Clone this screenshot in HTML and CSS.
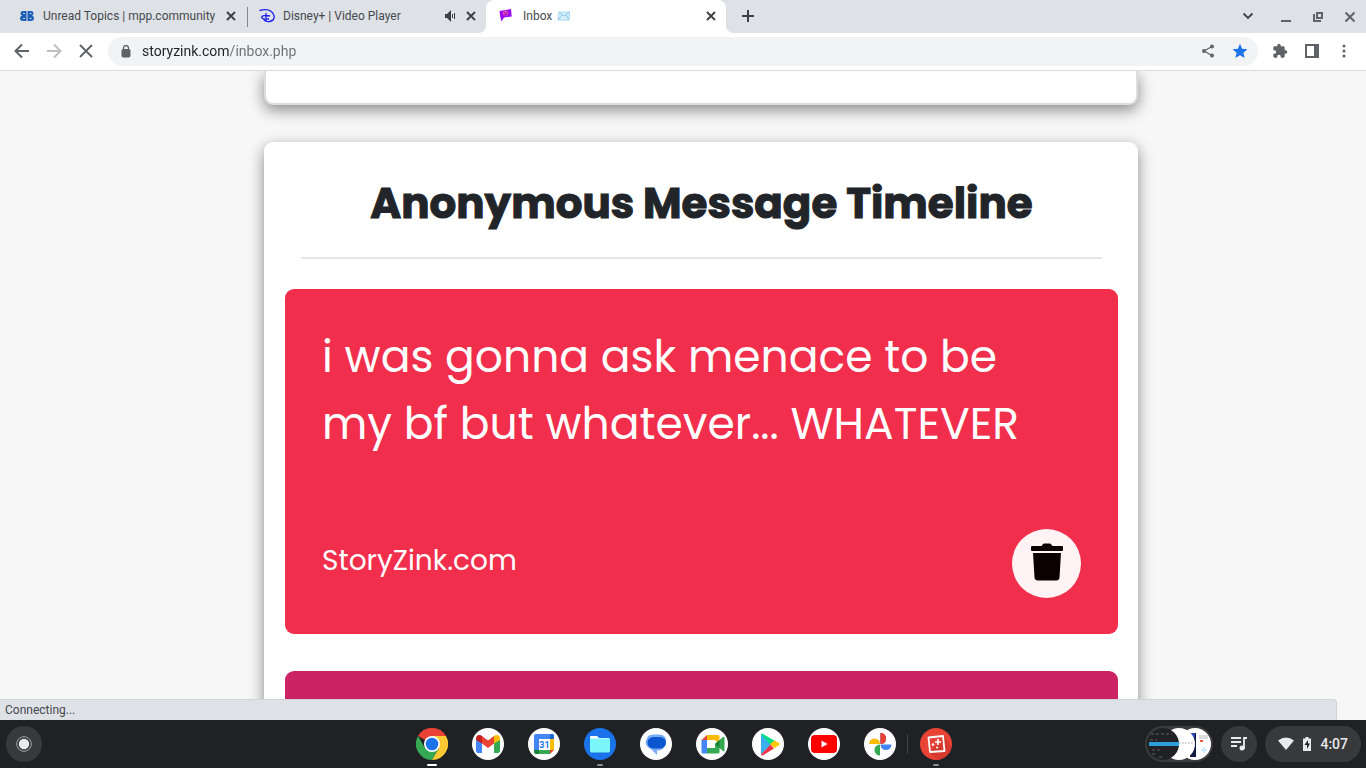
FILE: index.html
```html
<!DOCTYPE html>
<html lang="en">
<head>
  <meta charset="UTF-8">
  <title>Inbox</title>
  <link rel="stylesheet" href="styles.css">
</head>
<body>
  <header class="tabstrip">
    <div class="tab">
      <svg class="favicon" viewBox="0 0 16 16"><path d="M7.500 3H4Q1.500 3 1.500 5.300Q1.500 7 3 7.600Q1 8.300 1 10.300Q1 13 4 13H7.500ZM8.500 3H12q2.500 0 2.500 2.300q0 1.700-1.500 2.300q2 .7 2 2.700q0 2.700-3 2.700H8.500z" fill="#1f5fb8"/><path d="M4 5.500H6M4 10.500H6M10.500 5.500H12.500M10.500 10.500H12.500" stroke="#b9cfec"/></svg>
      <span class="tab-title">Unread Topics | mpp.community</span>
      <button class="icon-btn" aria-label="Close tab"><svg width="10" height="10" viewBox="0 0 10 10"><path d="M1 1l8 8M9 1L1 9" stroke="#3c4043" stroke-width="1.900"/></svg></button>
    </div>
    <div class="tab divided">
      <svg class="favicon" viewBox="0 0 16 16" fill="none" stroke="#1c1cf0" stroke-width="1.300"><path d="M.5 2.500Q12-.5 15 7.500Q16 12.500 10.500 13.500Q6 14 4.500 11.500M7 5v9M11 8Q3 6.500 2.500 9.500Q3.500 11.500 10 11"/></svg>
      <span class="tab-title">Disney+ | Video Player</span>
      <svg class="sound" width="10" height="12" viewBox="0 0 10 12"><path d="M0 4h2l4-4v12L2 8H0z" fill="#3c4043"/><path d="M7.500 4v4M9.500 3v6" stroke="#3c4043"/></svg>
      <button class="icon-btn" aria-label="Close tab"><svg width="10" height="10" viewBox="0 0 10 10"><path d="M1 1l8 8M9 1L1 9" stroke="#3c4043" stroke-width="1.900"/></svg></button>
    </div>
    <div class="tab active">
      <svg class="favicon" viewBox="0 0 16 16"><path d="M.5 3L12 1l.7 7.500L5 9.500l-2.500 4L1.300 9z" fill="#9a08f5"/><circle cx="6.500" cy="5" r="2.600" fill="#e84fb5"/><path d="M5 4l1.500 1.500L8.500 4M5.500 6.500h2" stroke="#8a0bb8" fill="none"/></svg>
      <span class="tab-title">Inbox
        <svg class="envelope" width="13" height="10" viewBox="0 0 13 10"><path d="M2 1h11l-1 8H1z" fill="#d8effb" stroke="#a8d6f0"/><path d="M2 1l5 4l6-4M1 9l4-5M12 9L9 4" fill="none" stroke="#8ec9ec"/></svg>
      </span>
      <button class="icon-btn" aria-label="Close tab"><svg width="10" height="10" viewBox="0 0 10 10"><path d="M1 1l8 8M9 1L1 9" stroke="#3c4043" stroke-width="1.900"/></svg></button>
    </div>
    <button class="icon-btn new-tab" aria-label="New tab"><svg width="12" height="12" viewBox="0 0 12 12"><path d="M6 0v12M0 6h12" stroke="#3c4043" stroke-width="2"/></svg></button>
    <div class="window-controls">
      <button class="icon-btn search-tabs" aria-label="Search tabs"><svg width="12" height="12" viewBox="0 0 12 12"><path d="M1.500 3.500L6 8l4.500-4.500" fill="none" stroke="#3c4043" stroke-width="1.800"/></svg></button>
      <button class="icon-btn" aria-label="Minimize"><svg width="12" height="12" viewBox="0 0 12 12"><path d="M1 10h10" stroke="#5f6368" stroke-width="2"/></svg></button>
      <button class="icon-btn" aria-label="Restore"><svg width="12" height="12" viewBox="0 0 12 12" fill="none" stroke="#5f6368" stroke-width="2"><path d="M5 2h5v5H5zM2 3v7h7"/></svg></button>
      <button class="icon-btn" aria-label="Close"><svg width="12" height="12" viewBox="0 0 12 12"><path d="M1.500 1.500l9 9M10.500 1.500l-9 9" stroke="#5f6368" stroke-width="2"/></svg></button>
    </div>
  </header>

  <nav class="toolbar">
    <button class="icon-btn tool" aria-label="Back"><svg width="16" height="16" viewBox="0 0 16 16"><path d="M15 8H2M8 1.500L1.500 8L8 14.500" fill="none" stroke="#5f6368" stroke-width="2"/></svg></button>
    <button class="icon-btn tool" aria-label="Forward"><svg width="16" height="16" viewBox="0 0 16 16"><path d="M1 8h13M8 1.500L14.500 8L8 14.500" fill="none" stroke="#bdbfc1" stroke-width="2"/></svg></button>
    <button class="icon-btn tool" aria-label="Stop loading"><svg width="14" height="14" viewBox="0 0 14 14"><path d="M1 1l12 12M13 1L1 13" stroke="#5f6368" stroke-width="1.900"/></svg></button>
    <div class="omnibox">
      <svg width="10" height="13" viewBox="0 0 10 13"><path d="M2.500 5V3a2.500 2.500 0 0 1 5 0v2" fill="none" stroke="#5f6368" stroke-width="1.300"/><rect x="1" y="4.500" width="8" height="7.500" rx="1" fill="#5f6368" stroke="#5f6368"/></svg>
      <input class="url" type="text" value="storyzink.com/inbox.php" aria-label="Address">
      <button class="icon-btn tool" aria-label="Share"><svg width="14" height="14" viewBox="0 0 14 14" fill="#5f6368"><path d="M11 2.500L3 7l8 4.500" fill="none" stroke="#5f6368" stroke-width="1.300"/><circle cx="11" cy="2.500" r="2"/><circle cx="3" cy="7" r="2"/><circle cx="11" cy="11.500" r="2"/></svg></button>
      <button class="icon-btn tool" aria-label="Bookmark"><svg width="16" height="16" viewBox="0 0 16 16"><path d="M8 .8l2.100 5l5.400.5l-4.100 3.500l1.200 5.200L8 12.200L3.400 15l1.200-5.200L.5 6.300l5.400-.5z" fill="#1a73e8"/></svg></button>
    </div>
    <button class="icon-btn tool" aria-label="Extensions"><svg width="16" height="16" viewBox="0 0 24 24"><path d="M20.500 11H19V7c0-1.100-.9-2-2-2h-4V3.500a2.500 2.500 0 0 0-5 0V5H4c-1.100 0-2 .9-2 2v3.800h1.500a2.700 2.700 0 0 1 0 5.400H2V20c0 1.100.9 2 2 2h3.800v-1.500a2.700 2.700 0 0 1 5.400 0V22H17c1.100 0 2-.9 2-2v-4h1.500a2.500 2.500 0 0 0 0-5z" fill="#5f6368"/></svg></button>
    <button class="icon-btn tool" aria-label="Side panel"><svg width="14" height="14" viewBox="0 0 14 14"><path d="M1 1h12v12H1z" fill="none" stroke="#5f6368" stroke-width="2"/><path d="M9 0h5v14H9z" fill="#5f6368"/></svg></button>
    <button class="icon-btn tool" aria-label="Menu"><svg width="4" height="14" viewBox="0 0 4 14" fill="#5f6368"><circle cx="2" cy="2" r="1.500"/><circle cx="2" cy="7" r="1.500"/><circle cx="2" cy="12" r="1.500"/></svg></button>
  </nav>

  <main class="page">
    <section class="card previous"></section>
    <section class="card timeline">
      <h1>Anonymous Message Timeline</h1>
      <hr>
      <article class="message red">
        <p class="message-text">i was gonna ask menace to be my bf but whatever... WHATEVER</p>
        <div class="message-footer">
          <span class="brand">StoryZink.com</span>
          <button class="delete" aria-label="Delete message">
            <svg width="34" height="38" viewBox="0 0 34 38" fill="#0c0002"><path d="M2 3h9.500l1.200-1.600q.6-.9 1.600-.9h5.400q1 0 1.600.9L22.500 3H32q1 0 1 1v3q0 1-1 1H2q-1 0-1-1V4q0-1 1-1zM3 10h28l-1.500 24.500q-.3 3-3.300 3H7.800q-3 0-3.300-3z"/></svg>
          </button>
        </div>
      </article>
      <article class="message pink"></article>
    </section>
    <div class="status">Connecting...</div>
  </main>

  <footer class="shelf">
    <div class="shelf-start">
      <button class="launcher" aria-label="Launcher"><svg width="16" height="16" viewBox="0 0 16 16"><circle cx="8" cy="8" r="7.300" fill="none" stroke="#a5a6a8"/><circle cx="8" cy="8" r="5.200" fill="#e8eaed"/></svg></button>
    </div>
    <div class="apps">
      <button class="app running focused" aria-label="Chrome"><svg viewBox="0 0 32 32"><path d="M16 16L2.100 8A16 16 0 0 1 29.900 8H16z" fill="#ea4335"/><path d="M2.100 8A16 16 0 0 0 16 32l7-12L16 16L9 20z" fill="#34a853"/><path d="M16 16l7 4l-7 12A16 16 0 0 0 29.900 8H16z" fill="#fcc934"/><circle cx="16" cy="16" r="8" fill="#fff"/><circle cx="16" cy="16" r="6.300" fill="#1a73e8"/></svg></button>
      <button class="app" aria-label="Gmail"><svg viewBox="0 0 32 32"><circle cx="16" cy="16" r="16" fill="#fff"/><path d="M4 10v13q0 2 2 2h4V14z" fill="#4285f4"/><path d="M28 10v13q0 2-2 2h-4V14z" fill="#34a853"/><path d="M10 8l6 4.500L22 8v7.500L16 20l-6-4.500z" fill="#ea4335"/><path d="M4 11q0-5 5-3.700l1 .7v7.500L4 12z" fill="#c5221f"/><path d="M28 11q0-5-5-3.700L22 8v7.500l6-3.500z" fill="#fbbc04"/></svg></button>
      <button class="app" aria-label="Calendar"><svg viewBox="0 0 32 32"><circle cx="16" cy="16" r="16" fill="#fff"/><path d="M6 8q0-2 2-2h16q2 0 2 2v3H11v11H6z" fill="#4285f4"/><path d="M22 6h2q2 0 2 2v3h-4z" fill="#1967d2"/><path d="M22 11h4v11h-4z" fill="#fbbc04"/><path d="M11 22h11v4H11z" fill="#34a853"/><path d="M6 22h5v4H8q-2 0-2-2z" fill="#188038"/><path d="M22 22h4l-4 4z" fill="#ea4335"/><path d="M11 11h11v11H11z" fill="#fff"/><text class="calendar-day" x="16.500" y="20">31</text></svg></button>
      <button class="app running" aria-label="Files"><svg viewBox="0 0 32 32"><circle cx="16" cy="16" r="16" fill="#1a73e8"/><path d="M6 9q0-1 1-1h6l2 2h9q2 0 2 2v3H6z" fill="#fff"/><path d="M6 10.500h19q1 0 1 1V23q0 1.500-1.500 1.500h-17Q6 24.500 6 23z" fill="#7cf5fb"/></svg></button>
      <button class="app" aria-label="Messages"><svg viewBox="0 0 32 32"><circle cx="16" cy="16" r="16" fill="#fff"/><path d="M13 6.500h6q6 0 7 5l-2 8q-2 3-7 3V27l-5.500-5.500Q5.500 19 5.500 13.500L8 8q2-1.500 5-1.500z" fill="#7baaf7"/><rect x="7.500" y="9" width="18.500" height="11.500" rx="5.700" fill="#0b57d0"/></svg></button>
      <button class="app" aria-label="Meet"><svg viewBox="0 0 32 32"><circle cx="16" cy="16" r="16" fill="#fff"/><path d="M5.500 12v12q0 1.500 1.500 1.500h4V12z" fill="#4285f4"/><path d="M11 7v5H5.500z" fill="#ea4335"/><path d="M11 7h11q1.500 0 1.500 1.500V16L19 12h-8z" fill="#fbbc04"/><path d="M11 20h8v-4l8-7q1.500-.8 1.500 1v12.500q0 1.500-1.500.5L23.500 20v4q0 1.500-1.500 1.500H11z" fill="#34a853"/><path d="M19 16l4.500-4v8z" fill="#188038"/><path d="M11 12h8v8h-8z" fill="#fff"/></svg></button>
      <button class="app" aria-label="Play Store"><svg viewBox="0 0 32 32"><circle cx="16" cy="16" r="16" fill="#fff"/><path d="M9 6v20.500L19.500 16z" fill="#3baff0"/><path d="M9 6q1-1 2 0l12 7l-4.500 4z" fill="#00df83"/><path d="M9 26.500q1 1.500 2.500.5L22 20.500l-3.500-4z" fill="#f43249"/><path d="M22.500 12.500l5 2.700q1 .8 0 1.600l-5 3.200l-4.500-4z" fill="#ffc900"/></svg></button>
      <button class="app" aria-label="YouTube"><svg viewBox="0 0 32 32"><circle cx="16" cy="16" r="16" fill="#fff"/><rect x="3" y="7" width="26" height="18" rx="4" fill="#f00"/><path d="M13.500 12.500v7l6-3.500z" fill="#fff"/></svg></button>
      <button class="app" aria-label="Photos"><svg viewBox="0 0 32 32"><circle cx="16" cy="16" r="16" fill="#fff"/><path d="M16.500 5a5.500 5.500 0 0 1 0 11z" fill="#ea4335"/><path d="M16.500 5v11h1.500q4-1.500 4-5.500T16.500 5zM27.500 16.500a5.500 5.500 0 0 1-11 0z" fill="#4285f4"/><path d="M16.500 5q5.500 0 5.500 5.500T16.500 16z" fill="#ea4335"/><path d="M16 27.500a5.500 5.500 0 0 1 0-11z" fill="#34a853"/><path d="M5 16a5.500 5.500 0 0 1 11 0z" fill="#fbbc04"/></svg></button>
      <button class="app running separated" aria-label="Screen sketch"><svg viewBox="0 0 32 32"><circle cx="16" cy="16" r="16" fill="#e94335"/><path d="M25 9l6.500 10A16 16 0 0 1 18 31.900L9 24z" fill="#d63a2e"/><path d="M8.500 9.500l14.500-1.500l1.500 15l-14.500 1z" fill="none" stroke="#fff" stroke-width="1.800" stroke-linejoin="round"/><path d="M18 11v6M15 14h6" stroke="#fff" stroke-width="1.600"/><circle cx="13" cy="16.500" r="1.200" fill="#fff"/><circle cx="17" cy="19.500" r="1.100" fill="#fff"/></svg></button>
    </div>
    <div class="tray">
      <button class="captures" aria-label="Recent captures"><svg width="68" height="36" viewBox="0 0 68 36"><rect width="68" height="36" rx="18" fill="#3a3b3d"/><circle cx="50" cy="18" r="16" fill="#fff"/><path d="M45 7h6v24h-6z" fill="#101a42"/><path d="M45 7h5v4h-5z" fill="#2448c0"/><path d="M54 9h9v4h-9z" fill="#ddd"/><path d="M55 15h3" stroke="#f05a3c" stroke-width="2"/><path d="M56 24h6M59 21v6" stroke="#cfe9fa" stroke-width="2"/><circle cx="34" cy="18" r="16" fill="#fff"/><path d="M34 17h14" stroke="#ddd" stroke-width="2" stroke-dasharray="2 1"/><circle cx="18" cy="18" r="16" fill="#202124"/><path d="M6 8h21M5 14h7M7 24h8M7 28h4M14 31h5" stroke="#606164" stroke-dasharray="3 2"/><path d="M4 16h30v4H4z" fill="#2c9fd8"/></svg></button>
      <button class="round" aria-label="Media controls"><svg width="18" height="16" viewBox="0 0 18 16"><path d="M1 2h10M1 6h10M1 10h6M14 13V2h3" fill="none" stroke="#e8eaed" stroke-width="1.800"/><circle cx="12" cy="12" r="2.500" fill="#e8eaed"/></svg></button>
      <button class="system">
        <svg width="16" height="14" viewBox="0 0 16 14"><path d="M0 3.500Q8-2.500 16 3.500L8 13z" fill="#e8eaed"/></svg>
        <svg width="8" height="14" viewBox="0 0 8 14"><path d="M2.500 0h3v1.500H8V14H0V1.500h2.500z" fill="#e8eaed"/><path d="M5 3L1.500 8H4v4l3-5.500H5z" fill="#202124"/></svg>
        <span>4:07</span>
      </button>
    </div>
  </footer>
</body>
</html>
```
FILE: styles.css
```css
* {
  box-sizing: border-box;
}
body {
  margin: 0;
  height: 100vh;
  display: flex;
  flex-direction: column;
  overflow: hidden;
  font-family: Roboto, sans-serif;
  background: #f7f7f7;
}
button {
  padding: 0;
  border: none;
  background: none;
  font-family: inherit;
  cursor: pointer;
}
svg {
  display: block;
  flex: none;
}
.icon-btn {
  display: flex;
  align-items: center;
  justify-content: center;
  width: 16px;
  height: 16px;
  flex: none;
}

/* Tabs */
.tabstrip {
  display: flex;
  height: 33px;
  flex: none;
  padding: 0 8px 0 6px;
  background: #dee1e6;
}
.tab {
  display: flex;
  align-items: center;
  width: 240px;
  padding: 0 7px 2px 13px;
  font-size: 12px;
  color: #45494d;
}
.favicon {
  width: 16px;
  height: 16px;
  margin-right: 8px;
}
.tab-title {
  flex: 1;
  display: flex;
  align-items: center;
  gap: 5px;
  min-width: 0;
  white-space: nowrap;
}
.divided {
  background: linear-gradient(#80868b, #80868b) 1px 50% / 1px 20px no-repeat;
}
.sound {
  margin-right: 8px;
}
.active {
  position: relative;
  background: #fff;
  border-radius: 8px 8px 0 0;
}
.active::before, .active::after {
  content: "";
  position: absolute;
  bottom: 0;
  width: 8px;
  height: 8px;
}
.active::before {
  left: -8px;
  background: radial-gradient(circle at 0 0, #dee1e6 8px, #fff 8px);
}
.active::after {
  right: -8px;
  background: radial-gradient(circle at 100% 0, #dee1e6 8px, #fff 8px);
}
.new-tab {
  margin: 8px 0 0 14px;
}
.window-controls {
  display: flex;
  gap: 16px;
  margin-left: auto;
  padding-top: 9px;
}
.search-tabs {
  margin: -1px 6px 0 0;
}

/* Toolbar */
.toolbar {
  display: flex;
  align-items: center;
  height: 38px;
  flex: none;
  padding: 0 6px 1px;
  background: #fff;
  border-bottom: 1px solid #d9dadc;
}
.tool {
  width: 32px;
  height: 28px;
}
.omnibox {
  display: flex;
  align-items: center;
  flex: 1;
  height: 29px;
  margin: 0 6px;
  padding: 0 2px 0 13px;
  border-radius: 15px;
  background: #f1f3f4;
}
.url {
  flex: 1;
  min-width: 0;
  margin-left: 11px;
  padding: 0;
  border: none;
  outline: none;
  font-family: inherit;
  font-size: 14px;
  color: transparent;
  background: linear-gradient(to right, #202124 87px, #6b6f74 87px);
  -webkit-background-clip: text;
  background-clip: text;
}

/* Page */
.page {
  position: relative;
  flex: 1;
  min-height: 0;
  overflow: hidden;
  padding: 0 228px 0 264px;
  font-family: Poppins, Inter, sans-serif;
}
.card {
  background: #fff;
  border-radius: 9px;
  box-shadow: 0 5px 15px rgba(0, 0, 0, 0.45);
}
.previous {
  height: 34px;
  border: 2px solid #ddd;
  border-top: none;
  border-radius: 0 0 9px 9px;
}
.timeline {
  margin-top: 37px;
  padding: 36px 20px 36px 21px;
}
.timeline h1 {
  margin: 0;
  font-size: 42px;
  line-height: 52px;
  font-weight: 700;
  text-align: center;
  color: #212529;
  -webkit-text-stroke: 1px #212529;
}
.timeline hr {
  height: 2px;
  margin: 27px 16px 30px;
  border: none;
  background: #e5e5e5;
}
.message {
  margin-bottom: 37px;
  padding: 34px 37px 36px;
  border-radius: 9px;
  color: #fff;
}
.red {
  background: #f12e4c;
}
.pink {
  background: #cc2364;
  height: 344px;
}
.message-text {
  margin: 0 0 72px;
  padding-right: 12px;
  font-size: 44px;
  line-height: 67px;
}
.message-footer {
  display: flex;
  align-items: center;
  justify-content: space-between;
}
.brand {
  padding-bottom: 6px;
  font-size: 28px;
}
.delete {
  display: flex;
  align-items: center;
  justify-content: center;
  width: 69px;
  height: 69px;
  padding-bottom: 4px;
  border-radius: 50%;
  background: #fff3f5;
}
.status {
  position: absolute;
  left: 0;
  right: 29px;
  bottom: 0;
  height: 21px;
  padding-left: 5px;
  border-top: 1px solid #d0d2d5;
  border-right: 1px solid #d0d2d5;
  border-radius: 0 4px 0 0;
  background: #dee1e6;
  font-family: Roboto, sans-serif;
  font-size: 12px;
  line-height: 20px;
  color: #45494d;
}

/* Shelf */
.shelf {
  display: grid;
  grid-template-columns: 1fr auto 1fr;
  align-items: center;
  height: 48px;
  flex: none;
  padding: 0 5px 0 6px;
  background: #202124;
}
.launcher, .round {
  display: flex;
  align-items: center;
  justify-content: center;
  width: 36px;
  height: 36px;
  border-radius: 50%;
  background: #38393b;
}
.apps {
  display: flex;
  gap: 24px;
}
.app {
  position: relative;
  width: 32px;
  height: 32px;
}
.running::after {
  content: "";
  position: absolute;
  left: 13px;
  bottom: -6px;
  width: 6px;
  height: 2px;
  border-radius: 1px;
  background: #8c8d8f;
}
.focused::after {
  left: 11px;
  width: 10px;
  background: #fff;
}
.separated::before {
  content: "";
  position: absolute;
  left: -13px;
  top: 6px;
  width: 1px;
  height: 20px;
  background: #414245;
}
.calendar-day {
  font-size: 9px;
  font-weight: 700;
  text-anchor: middle;
  fill: #1a73e8;
}
.tray {
  display: flex;
  justify-content: flex-end;
  gap: 8px;
}
.system {
  display: flex;
  align-items: center;
  gap: 9px;
  height: 36px;
  padding: 0 13px;
  border-radius: 18px;
  background: #38393b;
  color: #e8eaed;
  font-size: 14px;
  font-weight: 500;
}
```
